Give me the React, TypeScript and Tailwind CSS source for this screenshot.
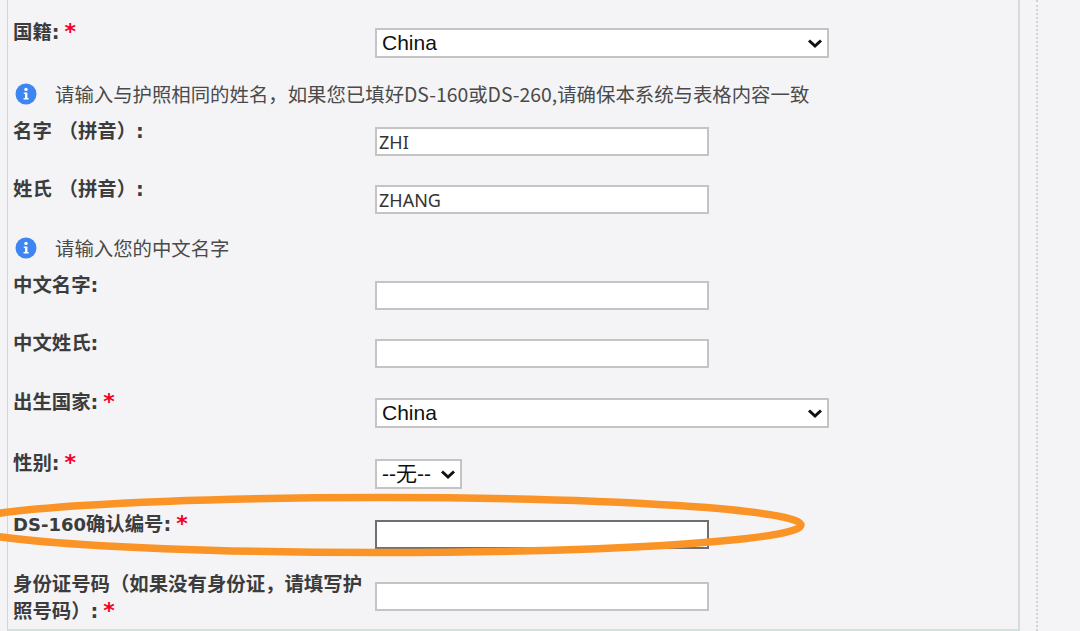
import React from 'react';

const font = "font-['DejaVu_Sans','Noto_Sans_CJK_SC',sans-serif]";

function Star() {
  return <span className="ml-[5px] font-bold text-[#f5001e] text-[22px] leading-[20px]">*</span>;
}

function Label({ children, required }: { children: React.ReactNode; required?: boolean }) {
  return (
    <label className="block w-[356px] mr-[6px] pt-[1px] text-[19.4px] font-bold leading-[27px] text-[#3c3c3c]">
      {children}
      {required && <Star />}
    </label>
  );
}

function TextField({ value, focused }: { value?: string; focused?: boolean }) {
  return (
    <input
      readOnly
      value={value ?? ''}
      className={`mt-[10px] block w-[334px] h-[29px] bg-white border-2 px-[2px] text-[18px] font-['Noto_Sans',sans-serif] text-[#333] outline-none ${
        focused ? 'border-[#6f6f6f]' : 'border-[#c4c4c4]'
      }`}
    />
  );
}

function Chevron() {
  return (
    <svg width="16" height="11" viewBox="0 0 16 11" className="absolute right-[6px] top-[10px] pointer-events-none">
      <path d="M2 2.5 L8 8 L14 2.5" fill="none" stroke="#111" strokeWidth="3" />
    </svg>
  );
}

function Select({ value, wide }: { value: string; wide?: boolean }) {
  return (
    <div className={`relative mt-[10px] h-[30px] ${wide ? 'w-[454px]' : 'w-[87px]'}`}>
      <select
        defaultValue={value}
        className="block w-full h-full appearance-none bg-white border-2 border-[#c4c4c4] pl-[5px] text-[21px] leading-[26px] text-[#111] font-['Liberation_Sans','Noto_Sans_CJK_SC',sans-serif] outline-none"
      >
        <option>{value}</option>
      </select>
      <Chevron />
    </div>
  );
}

function InfoRow({ text, className }: { text: string; className: string }) {
  return (
    <div className={`flex items-center h-[28px] ${className}`}>
      <svg width="22" height="22" viewBox="0 0 22 22" className="ml-[2px] mr-[18px] shrink-0">
        <circle cx="11" cy="11" r="10.5" fill="#3d86f2" />
        <circle cx="11" cy="6.4" r="1.7" fill="#fff" />
        <path d="M8.8 9.4 H12.4 V15 H13.6 V16.6 H8.6 V15 H10 V11 H8.8 Z" fill="#fff" />
      </svg>
      <span className="text-[19.4px] leading-[28px] text-[#4a4a4a] font-['Noto_Sans_CJK_SC',sans-serif]">{text}</span>
    </div>
  );
}

export default function App() {
  return (
    <div className={`relative flex w-[1080px] h-[631px] overflow-hidden bg-[#f4f4f6] ${font}`}>
      <div className="ml-[7px] w-[1013px] h-[631px] border-l border-r-2 border-b-2 border-l-[#d4d4d6] border-r-[#d9d9db] border-b-[#d3e0db] pl-[5px]">
        <div className="flex mt-[18px]">
          <Label required>国籍:</Label>
          <Select value="China" wide />
        </div>
        <InfoRow className="mt-[22px]" text="请输入与护照相同的姓名，如果您已填好DS-160或DS-260,请确保本系统与表格内容一致" />
        <div className="flex mt-[9px]">
          <Label>名字 （拼音）:</Label>
          <TextField value="ZHI" />
        </div>
        <div className="flex mt-[19px]">
          <Label>姓氏 （拼音）:</Label>
          <TextField value="ZHANG" />
        </div>
        <InfoRow className="mt-[20px]" text="请输入您的中文名字" />
        <div className="flex mt-[9px]">
          <Label>中文名字:</Label>
          <TextField />
        </div>
        <div className="flex mt-[19px]">
          <Label>中文姓氏:</Label>
          <TextField />
        </div>
        <div className="flex mt-[20px]">
          <Label required>出生国家:</Label>
          <Select value="China" wide />
        </div>
        <div className="flex mt-[21px]">
          <Label required>性别:</Label>
          <Select value="--无--" />
        </div>
        <div className="flex mt-[21px]">
          <Label required><span className="text-[18px]">DS-160</span>确认编号:</Label>
          <TextField focused />
        </div>
        <div className="flex mt-[23px]">
          <div className="-mt-[2px]">
            <Label required>身份证号码（如果没有身份证，请填写护照号码）:</Label>
          </div>
          <TextField />
        </div>
      </div>
      <div className="ml-[16px] h-full border-l-2 border-dotted border-[#d2d2d4]" />
      <svg width="1080" height="631" viewBox="0 0 1080 631" className="absolute left-0 top-0 pointer-events-none">
        <ellipse cx="380" cy="525" rx="421" ry="27.5" fill="none" stroke="#fb9426" strokeWidth="7.5" />
      </svg>
    </div>
  );
}
